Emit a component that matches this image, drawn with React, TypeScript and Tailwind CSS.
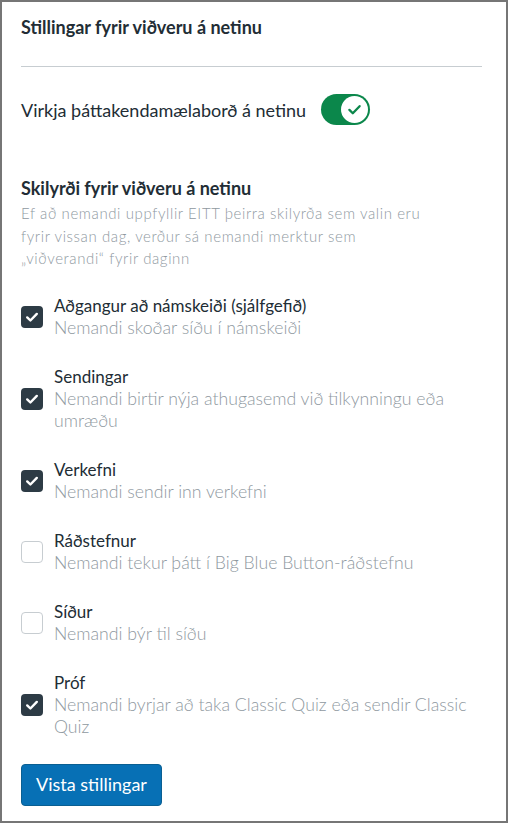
import React from 'react';

const items = [
  { label: 'Aðgangur að námskeiði (sjálfgefið)', desc: 'Nemandi skoðar síðu í námskeiði', checked: true },
  { label: 'Sendingar', desc: 'Nemandi birtir nýja athugasemd við tilkynningu eða umræðu', checked: true },
  { label: 'Verkefni', desc: 'Nemandi sendir inn verkefni', checked: true },
  { label: 'Ráðstefnur', desc: 'Nemandi tekur þátt í Big Blue Button-ráðstefnu', checked: false },
  { label: 'Síður', desc: 'Nemandi býr til síðu', checked: false },
  { label: 'Próf', desc: 'Nemandi byrjar að taka Classic Quiz eða sendir Classic Quiz', checked: true },
];

function Check({ className, width = 2.4 }: { className?: string; width?: number }) {
  return (
    <svg viewBox="0 0 16 16" className={className} fill="none" stroke="currentColor" strokeWidth={width} strokeLinecap="round" strokeLinejoin="round">
      <path d="M3.2 8.4l3.2 3.1 6.4-6.6" />
    </svg>
  );
}

export default function App() {
  return (
    <div
      className="h-[823px] w-[508px] border-2 border-[#767676] bg-white text-[#222d35]"
      style={{ fontFamily: 'Lato, "Noto Sans", sans-serif' }}
    >
      <div className="pl-[19px] pr-[24px] pt-[13px]">
        <h2 className="text-[18px] font-bold leading-[24px]">Stillingar fyrir viðveru á netinu</h2>
        <div className="mt-[27px] h-px bg-[#c7cdd1]" />

        <div className="mt-[27px] flex items-center gap-[15px]">
          <span className="text-[18px] leading-[24px]">Virkja þáttakendamælaborð á netinu</span>
          <span className="relative flex h-[31px] w-[49px] items-center rounded-full bg-[#0b874b]">
            <span className="absolute right-[2px] flex h-[27px] w-[27px] items-center justify-center rounded-full bg-white">
              <Check className="h-[17px] w-[17px] text-[#0b874b]" width={2.2} />
            </span>
          </span>
        </div>

        <h3 className="mt-[51px] text-[18px] font-bold leading-[24px]">Skilyrði fyrir viðveru á netinu</h3>
        <p className="mt-[2px] max-w-[415px] text-[15px] font-light leading-[22.5px] tracking-[0.6px] text-[#8f999f]">
          Ef að nemandi uppfyllir EITT þeirra skilyrða sem valin eru fyrir vissan dag, verður sá nemandi merktur sem „viðverandi“ fyrir daginn
        </p>

        <div className="mt-[25px] flex flex-col gap-[27px]">
          {items.map((it) => (
            <label key={it.label} className="flex items-center gap-[11px]">
              {it.checked ? (
                <span className="flex h-[22px] w-[22px] shrink-0 items-center justify-center rounded-[4px] bg-[#2d3b45]">
                  <Check className="h-[16px] w-[16px] text-white" width={2.4} />
                </span>
              ) : (
                <span className="h-[22px] w-[22px] shrink-0 rounded-[4px] border border-[#c7cdd1] bg-white" />
              )}
              <span className="flex flex-col">
                <span className="text-[17px] leading-[22px]">{it.label}</span>
                <span className="text-[17.7px] font-light leading-[22px] text-[#8f999f]">{it.desc}</span>
              </span>
            </label>
          ))}
        </div>

        <button className="mt-[26px] h-[42px] rounded-[4px] border border-[#0a5f92] bg-[#0770b5] px-[14px] text-[18px] text-white">
          Vista stillingar
        </button>
      </div>
    </div>
  );
}
